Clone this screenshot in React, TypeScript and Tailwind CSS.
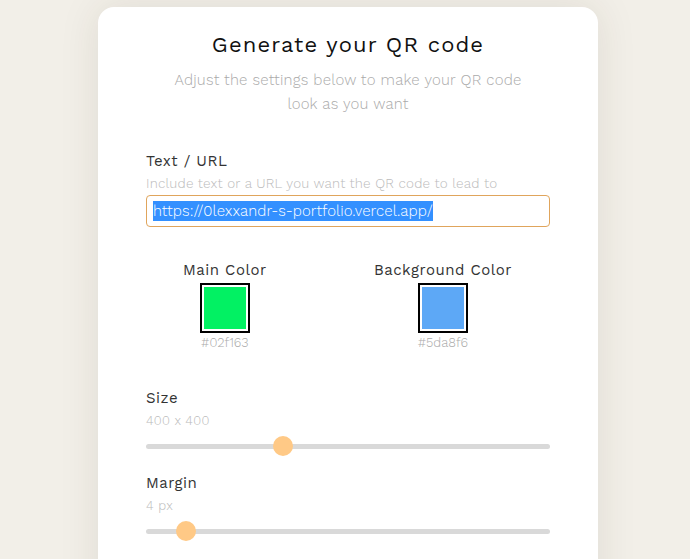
import React from "react";

const font = { fontFamily: "'Work Sans', Inter, 'Open Sans', sans-serif" };

function Slider({ thumb }: { thumb: string }) {
  return (
    <div className="relative h-5 flex items-center">
      <div className="w-full h-[5px] rounded-full bg-[#d9d9d9]" />
      <div className={`absolute top-0 w-5 h-5 rounded-full bg-[#ffc986] ${thumb}`} />
    </div>
  );
}

function Swatch({ color, label, hex }: { color: string; label: string; hex: string }) {
  return (
    <div className="flex flex-col items-center">
      <div className="text-[15px] leading-5 text-[#333] tracking-[0.5px]">{label}</div>
      <div className="mt-[3px] w-[50px] h-[50px] border-2 border-black bg-white p-[2px]">
        <div className="w-full h-full" style={{ background: color }} />
      </div>
      <div className="mt-[1px] text-[13px] leading-[18px] text-[#aaa] font-light">{hex}</div>
    </div>
  );
}

export default function App() {
  return (
    <div className="h-screen bg-[#f2efe8] flex justify-center pt-[7px] pl-[6px] overflow-hidden" style={font}>
      <div className="w-[500px] h-[600px] shrink-0 bg-white rounded-[16px] shadow-[0_0_40px_rgba(60,50,30,0.10)] px-12 pt-6">
        <h1 className="text-center text-[22px] leading-[28px] text-[#111] tracking-[1.1px]">Generate your QR code</h1>
        <p className="mt-[9px] text-center text-[15px] leading-6 text-[#aaa] font-light tracking-[0.2px] px-[20px]">
          Adjust the settings below to make your QR code look as you want
        </p>

        <div className="mt-[35px] text-[15px] leading-5 text-[#333] tracking-[0.5px]">Text / URL</div>
        <div className="mt-[3px] text-[13.5px] leading-[18px] text-[#bbb] font-light tracking-[0.2px] whitespace-nowrap">Include text or a URL you want the QR code to lead to</div>
        <div className="mt-[3px] h-8 rounded-[4px] border border-[#e0a55c] flex items-center px-[6px]">
          <span className="bg-[#3390ff] text-white text-[15px] leading-[20px] font-light tracking-[0.1px]">https://0lexxandr-s-portfolio.vercel.app/</span>
        </div>

        <div className="mt-[33px] flex justify-between pl-[37px] pr-[38px]">
          <Swatch color="#02f163" label="Main Color" hex="#02f163" />
          <Swatch color="#5da8f6" label="Background Color" hex="#5da8f6" />
        </div>

        <div className="mt-[36px] text-[15px] leading-5 text-[#333] tracking-[0.5px]">Size</div>
        <div className="mt-[4px] text-[13px] leading-[18px] text-[#bbb] font-light tracking-[0.3px]">400 x 400</div>
        <div className="mt-[6px]">
          <Slider thumb="left-[127px]" />
        </div>

        <div className="mt-[17px] text-[15px] leading-5 text-[#333] tracking-[0.5px]">Margin</div>
        <div className="mt-[4px] text-[13px] leading-[18px] text-[#bbb] font-light tracking-[0.3px]">4 px</div>
        <div className="mt-[6px]">
          <Slider thumb="left-[30px]" />
        </div>
      </div>
    </div>
  );
}
